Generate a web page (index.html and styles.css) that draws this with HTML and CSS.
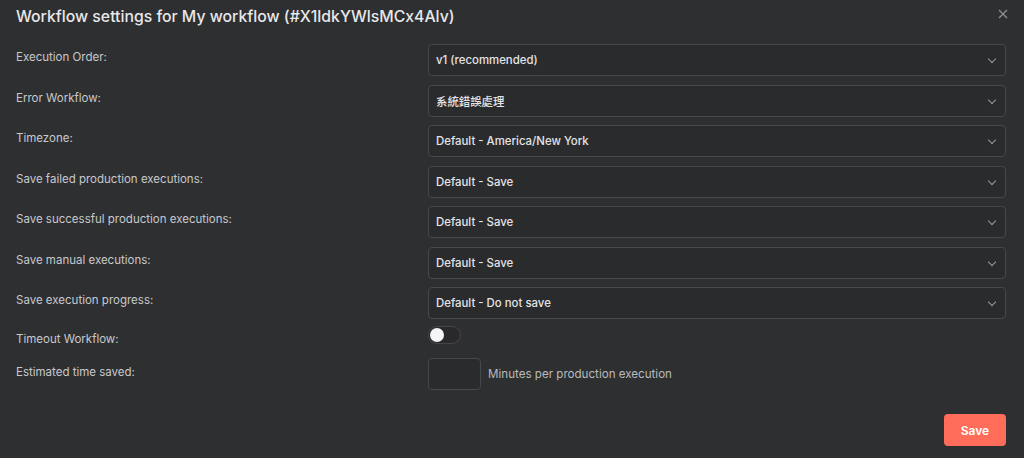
FILE: index.html
```html
<!DOCTYPE html>
<html lang="en">
<head>
    <meta charset="UTF-8">
    <meta name="viewport" content="width=device-width, initial-scale=1.0">
    <title>Workflow settings</title>
    <link rel="stylesheet" href="styles.css">
</head>
<body>
    <div class="dialog">
        <div class="dialog-header">
            <h1 class="dialog-title">Workflow settings for My workflow (#X1ldkYWlsMCx4Alv)</h1>
            <button class="close-btn" aria-label="Close">
                <svg width="10" height="10" viewBox="0 0 10 10"><path d="M1 1L9 9M9 1L1 9" stroke="currentColor" stroke-width="1.4" fill="none"/></svg>
            </button>
        </div>

        <div class="settings">
            <div class="row">
                <label class="row-label">Execution Order:</label>
                <div class="select">v1 (recommended)<span class="chevron"></span></div>
            </div>
            <div class="row">
                <label class="row-label">Error Workflow:</label>
                <div class="select">系統錯誤處理<span class="chevron"></span></div>
            </div>
            <div class="row">
                <label class="row-label">Timezone:</label>
                <div class="select">Default - America/New York<span class="chevron"></span></div>
            </div>
            <div class="row">
                <label class="row-label">Save failed production executions:</label>
                <div class="select">Default - Save<span class="chevron"></span></div>
            </div>
            <div class="row">
                <label class="row-label">Save successful production executions:</label>
                <div class="select">Default - Save<span class="chevron"></span></div>
            </div>
            <div class="row">
                <label class="row-label">Save manual executions:</label>
                <div class="select">Default - Save<span class="chevron"></span></div>
            </div>
            <div class="row">
                <label class="row-label">Save execution progress:</label>
                <div class="select">Default - Do not save<span class="chevron"></span></div>
            </div>
            <div class="row row-toggle">
                <label class="row-label">Timeout Workflow:</label>
                <div class="toggle"><span class="toggle-knob"></span></div>
            </div>
            <div class="row row-input">
                <label class="row-label">Estimated time saved:</label>
                <div class="time-saved">
                    <input type="text" class="minutes-input">
                    <span class="minutes-text">Minutes per production execution</span>
                </div>
            </div>
        </div>

        <div class="dialog-footer">
            <button class="save-btn">Save</button>
        </div>
    </div>
</body>
</html>
```

FILE: styles.css
```css
body {
    margin: 0;
    background-color: #2e2f31;
    font-family: Inter, "Noto Sans CJK TC", sans-serif;
    color: #c8c9cc;
}

.dialog {
    padding: 5px 18px 0 16px;
}

.dialog-header {
    display: flex;
    justify-content: space-between;
    align-items: flex-start;
    height: 39px;
}

.dialog-title {
    margin: 0;
    font-size: 15.8px;
    font-weight: 500;
    line-height: 24px;
    color: #e8e8ea;
}

.close-btn {
    background: none;
    border: none;
    padding: 0;
    margin: 4px -2px 0 0;
    color: #8d8e92;
    cursor: pointer;
    line-height: 0;
}

.settings {
    display: flex;
    flex-direction: column;
    gap: 8.5px;
}

.row {
    display: grid;
    grid-template-columns: 412px 1fr;
    align-items: center;
}

.row-label {
    font-size: 11.5px;
    line-height: 16px;
    margin-bottom: 6px;
    color: #c8c9cc;
}

.select {
    position: relative;
    height: 32px;
    box-sizing: border-box;
    border: 1px solid #47484b;
    border-radius: 4px;
    background-color: #2a2b2d;
    padding: 0 28px 0 7px;
    display: flex;
    align-items: center;
    font-size: 11.4px;
    font-weight: 500;
    color: #e4e4e6;
}

.chevron {
    position: absolute;
    right: 10px;
    top: 11px;
    width: 5px;
    height: 5px;
    border-right: 1.3px solid #9a9b9f;
    border-bottom: 1.3px solid #9a9b9f;
    transform: rotate(45deg);
}

.row-toggle {
    height: 22px;
    align-items: start;
}

.row-toggle .row-label {
    margin: 3px 0 0 0;
}

.toggle {
    position: relative;
    width: 33px;
    height: 18px;
    box-sizing: border-box;
    margin-top: -1.5px;
    border: 1px solid #45464a;
    border-radius: 9px;
    background-color: #29292b;
}

.toggle-knob {
    position: absolute;
    left: 1px;
    top: 1px;
    width: 14px;
    height: 14px;
    border-radius: 50%;
    background-color: #f3f3f8;
}

.row-input .row-label {
    margin-bottom: 4px;
}

.time-saved {
    display: flex;
    align-items: center;
    gap: 7px;
}

.minutes-input {
    width: 53px;
    height: 32px;
    box-sizing: border-box;
    border: 1px solid #47484b;
    border-radius: 4px;
    background-color: #2a2b2d;
    padding: 0 8px;
    color: #e4e4e6;
    font-family: inherit;
}

.minutes-text {
    font-size: 11.6px;
    color: #b9babd;
}

.dialog-footer {
    display: flex;
    justify-content: flex-end;
    margin-top: 24px;
}

.save-btn {
    width: 62px;
    height: 32px;
    border: none;
    border-radius: 4px;
    background-color: #ff6d5a;
    color: #fff;
    font-family: inherit;
    font-size: 12px;
    font-weight: 600;
    cursor: pointer;
}
```
